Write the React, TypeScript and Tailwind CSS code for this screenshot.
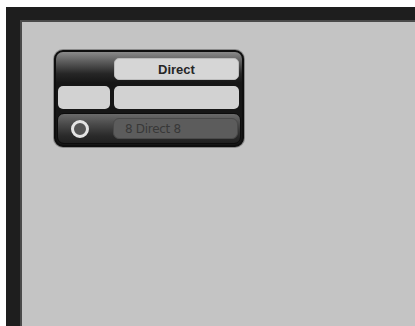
export default function App() {
  return (
    <div className="w-[415px] h-[326px] bg-white overflow-hidden flex flex-col pt-[7px] pl-[6px] font-['Liberation_Sans',sans-serif]">
      <div className="flex-1 flex flex-col bg-[#1e1e1e] pt-[13px] pl-[14px]">
        <div className="flex-1 bg-[#c4c4c4] border-l-2 border-t-2 border-[#4a4a4a] pl-[32px] pt-[28px]">
          <div className="w-[190px] h-[97px] rounded-[9px] bg-[#161616] border-2 border-[#0e0e0e] shadow-[0_0_0_1px_#8a8a8a] overflow-hidden flex flex-col">
            <div className="h-[31px] shrink-0 grid grid-cols-[53px_125px] gap-x-[4px] pl-[1px] bg-[linear-gradient(to_bottom,#8a8a8a_0%,#5e5e5e_30%,#262626_70%,#161616_100%)]">
              <div />
              <div className="mt-[6px] h-[22px] rounded-[5px] bg-[#d6d6d6] border border-[#bcbcbc] flex items-center justify-center pt-[2px] text-[13px] font-bold text-[#262626]">
                Direct
              </div>
            </div>
            <div className="h-[23px] mt-[3px] shrink-0 grid grid-cols-[52px_125px] gap-x-[4px] pl-[2px]">
              <div className="rounded-[5px] bg-[#d2d2d2]" />
              <div className="rounded-[5px] bg-[#d2d2d2]" />
            </div>
            <div className="flex-1 mt-[4px] mx-px mb-px rounded-[7px] border border-[#0c0c0c] bg-[linear-gradient(to_bottom,#6a6a6a_0%,#4a4a4a_35%,#2a2a2a_75%,#202020_100%)] flex items-center">
              <div className="ml-[13px] w-[18px] h-[18px] rounded-full border-[3px] border-[#e4e4e4] bg-[#555555]" />
              <div className="ml-[24px] h-[21px] w-[125px] rounded-[6px] bg-[#5c5c5c] border border-[#4a4a4a] flex items-center pl-[11px] text-[12px] text-[#383838] font-['DejaVu_Sans',sans-serif] tracking-[-0.3px]">
                8 Direct 8
              </div>
            </div>
          </div>
        </div>
      </div>
    </div>
  );
}
